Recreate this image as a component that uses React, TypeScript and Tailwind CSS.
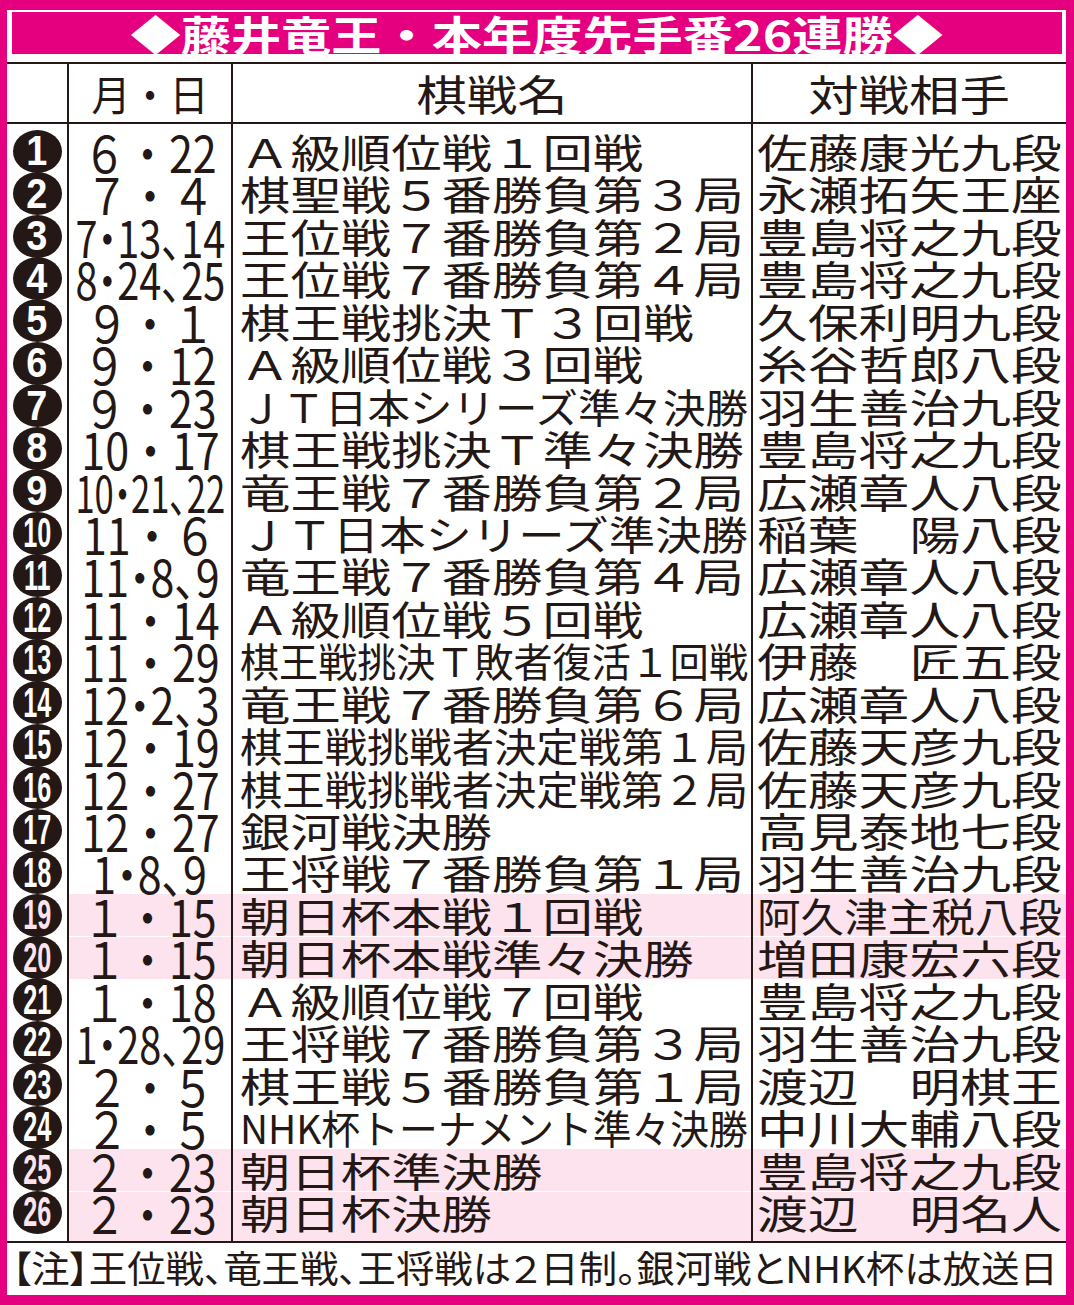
import { useLayoutEffect, useRef, useState } from "react";
import clsx from "clsx";

type Game = {
  date: string;
  title: string;
  opponent: string;
  pink?: boolean;
};

const games: Game[] = [
  { date: "６・22", title: "Ａ級順位戦１回戦", opponent: "佐藤康光九段" },
  { date: "７・４", title: "棋聖戦５番勝負第３局", opponent: "永瀬拓矢王座" },
  { date: "7・13、14", title: "王位戦７番勝負第２局", opponent: "豊島将之九段" },
  { date: "8・24、25", title: "王位戦７番勝負第４局", opponent: "豊島将之九段" },
  { date: "９・１", title: "棋王戦挑決Ｔ３回戦", opponent: "久保利明九段" },
  { date: "９・12", title: "Ａ級順位戦３回戦", opponent: "糸谷哲郎八段" },
  { date: "９・23", title: "ＪＴ日本シリーズ準々決勝", opponent: "羽生善治九段" },
  { date: "10・17", title: "棋王戦挑決Ｔ準々決勝", opponent: "豊島将之九段" },
  { date: "10・21、22", title: "竜王戦７番勝負第２局", opponent: "広瀬章人八段" },
  { date: "11・６", title: "ＪＴ日本シリーズ準決勝", opponent: "稲葉　陽八段" },
  { date: "11・8、9", title: "竜王戦７番勝負第４局", opponent: "広瀬章人八段" },
  { date: "11・14", title: "Ａ級順位戦５回戦", opponent: "広瀬章人八段" },
  { date: "11・29", title: "棋王戦挑決Ｔ敗者復活１回戦", opponent: "伊藤　匠五段" },
  { date: "12・2、3", title: "竜王戦７番勝負第６局", opponent: "広瀬章人八段" },
  { date: "12・19", title: "棋王戦挑戦者決定戦第１局", opponent: "佐藤天彦九段" },
  { date: "12・27", title: "棋王戦挑戦者決定戦第２局", opponent: "佐藤天彦九段" },
  { date: "12・27", title: "銀河戦決勝", opponent: "高見泰地七段" },
  { date: "1・8、9", title: "王将戦７番勝負第１局", opponent: "羽生善治九段" },
  { date: "１・15", title: "朝日杯本戦１回戦", opponent: "阿久津主税八段", pink: true },
  { date: "１・15", title: "朝日杯本戦準々決勝", opponent: "増田康宏六段", pink: true },
  { date: "１・18", title: "Ａ級順位戦７回戦", opponent: "豊島将之九段" },
  { date: "1・28、29", title: "王将戦７番勝負第３局", opponent: "羽生善治九段" },
  { date: "２・５", title: "棋王戦５番勝負第１局", opponent: "渡辺　明棋王" },
  { date: "２・５", title: "NHK杯トーナメント準々決勝", opponent: "中川大輔八段" },
  { date: "２・23", title: "朝日杯準決勝", opponent: "豊島将之九段", pink: true },
  { date: "２・23", title: "朝日杯決勝", opponent: "渡辺　明名人", pink: true },
];

// squeezes or stretches one line of text so it fits a given width;
// margins make the layout box match the scaled text
const Fit = ({
  text,
  width,
  max,
  center = false,
  className,
}: {
  text: string;
  width: number;
  max: number;
  center?: boolean;
  className?: string;
}) => {
  const ref = useRef<HTMLSpanElement>(null);
  const [fit, setFit] = useState({ scale: max, natural: 0 });

  useLayoutEffect(() => {
    if (!ref.current) return;
    const natural = ref.current.scrollWidth;
    setFit({ scale: Math.min(max, width / natural), natural });
  }, [text, width, max]);

  const extra = fit.natural * (fit.scale - 1);

  return (
    <span
      ref={ref}
      className={clsx(
        "inline-block shrink-0 whitespace-nowrap",
        center ? "origin-center" : "origin-left",
        className,
      )}
      style={{
        transform: `scaleX(${fit.scale})`,
        marginLeft: center ? extra / 2 : 0,
        marginRight: center ? extra / 2 : extra,
      }}
    >
      {text}
    </span>
  );
};

const Badge = ({ n, pink }: { n: number; pink?: boolean }) => (
  <div className="flex h-[43px] w-[49px] items-center justify-center rounded-[50%] bg-[#231815]">
    <span
      className={clsx(
        "inline-block font-['Liberation_Sans',sans-serif] text-[42px] font-bold leading-none",
        n > 9 ? "scale-x-[0.6]" : "scale-x-90",
        pink ? "text-[#fce3ee]" : "text-white",
      )}
    >
      {n}
    </span>
  </div>
);

export default function App() {
  return (
    <div className="h-[1305px] w-[1074px] bg-[#e4007f] pb-[10px] pl-[7px] pr-[8px] pt-[10px] font-['Noto_Sans_CJK_JP',sans-serif] text-[#231815]">
      <div className="flex h-full flex-col bg-white">
        <div className="ml-[5px] mr-[4px] mt-[2px] flex h-[42px] items-center justify-center overflow-visible bg-[#e4007f] text-[41px] font-bold leading-none text-white">
          <Fit text="◆藤井竜王・本年度先手番26連勝◆" width={812} max={1.23} center />
        </div>

        <div className="mt-[8px] grid grid-cols-[60px_164px_520px_315px] border-y-2 border-[#231815] text-[42px] leading-none">
          <div className="h-[58px]" />
          <div className="flex h-[58px] items-center justify-center border-l-2 border-[#231815]">
            <Fit text="月・日" width={150} max={0.93} center />
          </div>
          <div className="flex h-[58px] items-center justify-center border-l-2 border-[#231815]">
            <Fit text="棋戦名" width={400} max={1.2} center />
          </div>
          <div className="flex h-[58px] items-center justify-center border-l-2 border-[#231815]">
            <Fit text="対戦相手" width={300} max={1.2} center />
          </div>
        </div>

        <div className="flex flex-col">
          {games.map((g, i) => {
            const first = i === 0;
            const last = i === games.length - 1;
            const split = g.pink && games[i - 1]?.pink;
            const tight = g.date.includes("、");
            const cell = clsx(
              "box-content h-[42.44px] border-l-2 border-[#231815]",
              first && "pt-[6px]",
              last && "pb-[7.56px]",
              g.pink && "bg-[#fce3ee]",
              split && "shadow-[inset_0_1px_0_#ffffff]",
            );
            return (
              <div key={i} className="grid grid-cols-[60px_164px_520px_315px]">
                <div
                  className={clsx(
                    "box-content flex h-[42.44px] items-center justify-center",
                    first && "pt-[6px]",
                    last && "pb-[7.56px]",
                  )}
                >
                  <Badge n={i + 1} pink={g.pink} />
                </div>
                <div className={clsx(cell, "flex items-center justify-center text-[50px] leading-[42.44px]")}>
                  <Fit
                    text={g.date}
                    width={150}
                    max={0.86}
                    center
                    className={tight ? "[font-feature-settings:'palt']" : undefined}
                  />
                </div>
                <div className={clsx(cell, "flex items-center pl-[7px] text-[40px] leading-[42.44px]")}>
                  <Fit text={g.title} width={508} max={1.26} />
                </div>
                <div className={clsx(cell, "flex items-center pl-[4px] text-[40px] leading-[42.44px]")}>
                  <Fit text={g.opponent} width={305} max={1.27} />
                </div>
              </div>
            );
          })}
        </div>

        <div className="flex h-[52px] items-center border-t-2 border-[#231815] pl-[5px] text-[37px] leading-none">
          <Fit
            text="【注】王位戦、竜王戦、王将戦は２日制。銀河戦とNHK杯は放送日"
            width={1046}
            max={1.2}
            className="[font-feature-settings:'palt']"
          />
        </div>
      </div>
    </div>
  );
}
